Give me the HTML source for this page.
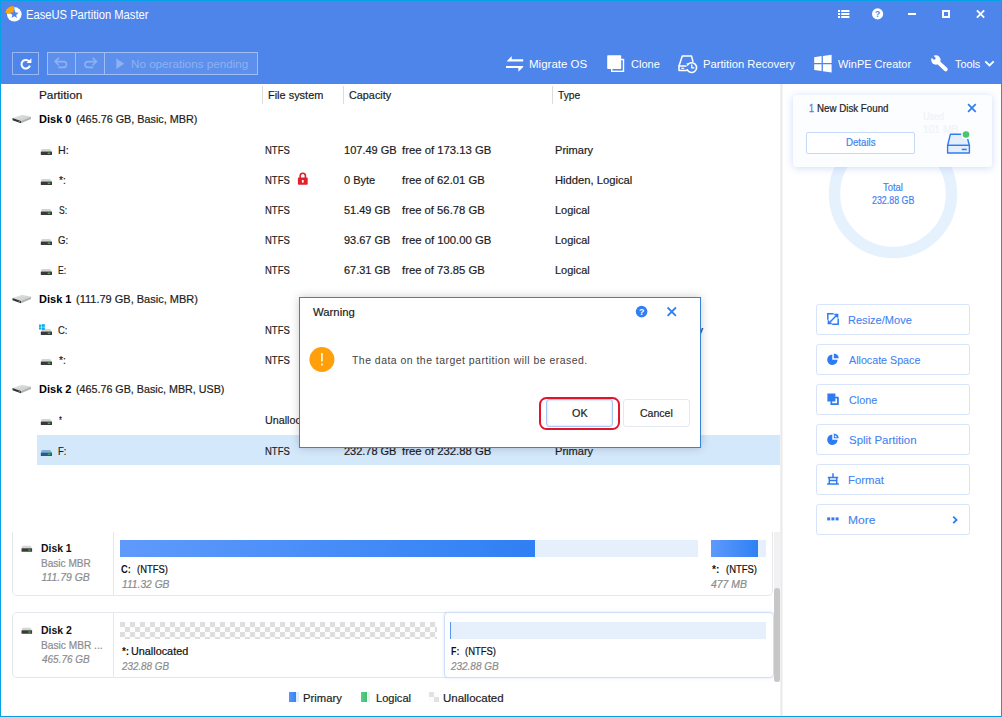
<!DOCTYPE html>
<html>
<head>
<meta charset="utf-8">
<title>EaseUS Partition Master</title>
<style>
*{box-sizing:border-box;margin:0;padding:0}
html,body{width:1002px;height:717px;overflow:hidden;background:#fff}
body{font-family:"Liberation Sans",sans-serif;font-size:12px;color:#1c1c1c;position:relative}
.abs{position:absolute}
svg{overflow:visible}
.t{position:absolute;white-space:nowrap;line-height:16px;height:16px;transform-origin:0 0;-webkit-text-stroke:0.2px}
#win{position:absolute;left:0;top:0;width:1002px;height:717px;overflow:hidden;background:#fff}
</style>
</head>
<body>
<div id="win">
<div class="abs" style="left:0px;top:0px;width:1002px;height:84px;background:#4e85eb"></div>
<svg class="abs" style="left:4px;top:4px;" width="20" height="20" viewBox="0 0 20 20"><circle cx="10.3" cy="10.3" r="7.3" fill="#fff"/><path d="M10.4 9.4 L1 9.4 A9.4 7.6 0 0 1 10.4 1.6 Z" fill="#4e85eb"/><path d="M9.9 8.9 L1.4 8.9 A8.6 6.9 0 0 1 9.9 2 Z" fill="#fba50f"/><path d="M10.3 5.6 l1.2 3 3.2 .2 -2.5 2.1 .8 3.1 -2.7-1.7 -2.7 1.7 .8-3.1 -2.5-2.1 3.2-.2z" fill="#4e85eb"/></svg>
<span class="t" style="left:26.37px;top:7px;font-size:12px;color:#fff;transform:scaleX(0.9321);-webkit-text-stroke:0;">EaseUS Partition Master</span>
<div class="abs" style="left:12px;top:52px;width:27px;height:23px;border:1px solid rgba(255,255,255,.42)"></div>
<svg class="abs" style="left:18px;top:57px;" width="15" height="14" viewBox="0 0 15 14"><path d="M11.6 5.2 A4.3 4.3 0 1 0 11.9 8.6" fill="none" stroke="#fff" stroke-width="2" stroke-linecap="butt"/><path d="M8.6 5.9 L13.4 5.9 L13.4 1.3 Z" fill="#fff"/></svg>
<div class="abs" style="left:47px;top:52px;width:211px;height:23px;border:1px solid rgba(255,255,255,.42);background:rgba(255,255,255,.09)"></div>
<div class="abs" style="left:75px;top:53px;width:1px;height:21px;background:rgba(255,255,255,.42)"></div>
<div class="abs" style="left:104px;top:53px;width:1px;height:21px;background:rgba(255,255,255,.42)"></div>
<svg class="abs" style="left:54px;top:57px;" width="15" height="12" viewBox="0 0 15 12"><path d="M1.2 4.6 H9.6 A2.9 2.9 0 0 1 9.6 10.4 H4.2" fill="none" stroke="#8eb1f3" stroke-width="1.6"/><path d="M4.9 0.9 L1.1 4.6 L4.9 8.3" fill="none" stroke="#8eb1f3" stroke-width="1.6"/></svg>
<svg class="abs" style="left:82.5px;top:57px;" width="15" height="12" viewBox="0 0 15 12"><g transform="translate(14.5,0) scale(-1,1)"><path d="M1.2 4.6 H9.6 A2.9 2.9 0 0 1 9.6 10.4 H4.2" fill="none" stroke="#8eb1f3" stroke-width="1.6"/><path d="M4.9 0.9 L1.1 4.6 L4.9 8.3" fill="none" stroke="#8eb1f3" stroke-width="1.6"/></g></svg>
<svg class="abs" style="left:116px;top:58px;" width="9" height="12" viewBox="0 0 9 12"><path d="M0.3 0.4 L8.3 5.7 L0.3 11 Z" fill="#8eb1f3"/></svg>
<span class="t" style="left:130.88px;top:56px;font-size:11.4px;color:#8eb1f3;transform:scaleX(1.0230);-webkit-text-stroke:0;">No operations pending</span>
<svg class="abs" style="left:505px;top:54px;" width="20" height="18" viewBox="0 0 20 18"><path d="M1.6 7.4 L6.7 1.9 V5.2 H18.2 V7.4 Z" fill="#fff"/><path d="M1 12 H18.2 V13 L13.4 17.8 V14.1 H1 Z" fill="#fff"/></svg>
<span class="t" style="left:529.19px;top:56px;font-size:11.4px;color:#fff;transform:scaleX(1.0116);-webkit-text-stroke:0;">Migrate OS</span>
<svg class="abs" style="left:607px;top:54px;" width="19" height="19" viewBox="0 0 19 19"><rect x="4.7" y="5.5" width="11.8" height="11.8" fill="none" stroke="#fff" stroke-width="1.4"/><rect x="0.2" y="1.2" width="14" height="13.8" rx="0.8" fill="#fff"/></svg>
<span class="t" style="left:630.71px;top:56px;font-size:11.4px;color:#fff;transform:scaleX(0.9704);-webkit-text-stroke:0;">Clone</span>
<svg class="abs" style="left:678px;top:55px;" width="21" height="19" viewBox="0 0 21 19"><path d="M8 11 H1 L4.3 0.9 H13.5 L14.9 6.4" fill="none" stroke="#fff" stroke-width="1.5" stroke-linejoin="round" stroke-linecap="round"/><path d="M1 11 V15.4 H8.4" fill="none" stroke="#fff" stroke-width="1.5" stroke-linejoin="round" stroke-linecap="round"/><path d="M9.6 9.9 A4.9 4.9 0 1 1 9.2 14.6" fill="none" stroke="#fff" stroke-width="1.5" stroke-linecap="round"/><path d="M8.2 8.2 L10.6 8.6 L9.9 10.9 Z" fill="#fff"/><path d="M13.8 10 V12.8 H16" fill="none" stroke="#fff" stroke-width="1.3" stroke-linecap="round"/><rect x="3.2" y="12.7" width="3" height="1.2" fill="#fff"/></svg>
<span class="t" style="left:702.61px;top:56px;font-size:11.4px;color:#fff;transform:scaleX(0.9859);-webkit-text-stroke:0;">Partition Recovery</span>
<svg class="abs" style="left:814px;top:54px;" width="18" height="19" viewBox="0 0 18 19"><path d="M0.2 3.2 L7.6 2.1 V9 H0.2 Z M8.9 1.9 L17.6 0.7 V9 H8.9 Z M0.2 10.3 H7.6 V17.1 L0.2 16 Z M8.9 10.3 H17.6 V18.5 L8.9 17.3 Z" fill="#fff"/></svg>
<span class="t" style="left:838.20px;top:56px;font-size:11.4px;color:#fff;transform:scaleX(0.9624);-webkit-text-stroke:0;">WinPE Creator</span>
<svg class="abs" style="left:930px;top:54px;" width="20" height="19" viewBox="0 0 20 19"><circle cx="5.9" cy="6" r="4.7" fill="#fff"/><path d="M8 8.1 L15.7 15.3" stroke="#fff" stroke-width="4" stroke-linecap="round"/><path d="M0.2 0.3 L5 5.1" stroke="#4e85eb" stroke-width="2.7"/></svg>
<span class="t" style="left:954.96px;top:56px;font-size:11.4px;color:#fff;transform:scaleX(0.9500);-webkit-text-stroke:0;">Tools</span>
<svg class="abs" style="left:984px;top:59px;" width="12" height="9" viewBox="0 0 12 9"><path d="M1.3 2.4 L5.5 6.4 L9.7 2.4" fill="none" stroke="#fff" stroke-width="2"/></svg>
<svg class="abs" style="left:837px;top:9px;" width="14" height="10" viewBox="0 0 14 10"><g fill="#fff"><rect x="1" y="1" width="2" height="2"/><rect x="4.2" y="1" width="8.2" height="2"/><rect x="1" y="4" width="2" height="2"/><rect x="4.2" y="4" width="8.2" height="2"/><rect x="1" y="7" width="2" height="2"/><rect x="4.2" y="7" width="8.2" height="2"/></g></svg>
<svg class="abs" style="left:871px;top:7px;" width="14" height="14" viewBox="0 0 14 14"><circle cx="6.6" cy="6.9" r="5.6" fill="#fff"/><text x="6.6" y="10" font-family="Liberation Sans" font-weight="bold" font-size="8.6" text-anchor="middle" fill="#4e85eb">?</text></svg>
<div class="abs" style="left:908px;top:13px;width:8px;height:2px;background:#fff"></div>
<div class="abs" style="left:942px;top:10px;width:8px;height:8px;border:2px solid #fff"></div>
<svg class="abs" style="left:975px;top:8px;" width="12" height="12" viewBox="0 0 12 12"><path d="M1.9 2.3 L9.2 9.7 M9.2 2.3 L1.9 9.7" stroke="#fff" stroke-width="1.8"/></svg>
<span class="t" style="left:38.77px;top:87px;font-size:11.4px;color:#1c1c1c;transform:scaleX(1.0350);">Partition</span>
<span class="t" style="left:267.84px;top:87px;font-size:11.4px;color:#1c1c1c;transform:scaleX(0.9607);">File system</span>
<span class="t" style="left:349.12px;top:87px;font-size:11.4px;color:#1c1c1c;transform:scaleX(0.9509);">Capacity</span>
<span class="t" style="left:558.37px;top:87px;font-size:11.4px;color:#1c1c1c;transform:scaleX(0.9042);">Type</span>
<div class="abs" style="left:262px;top:86px;width:1px;height:18px;background:#dcdcdc"></div>
<div class="abs" style="left:343px;top:86px;width:1px;height:18px;background:#dcdcdc"></div>
<div class="abs" style="left:552px;top:86px;width:1px;height:18px;background:#dcdcdc"></div>
<div class="abs" style="left:37px;top:435px;width:743px;height:30px;background:#d4e8fc"></div>
<svg class="abs" style="left:12px;top:114px;" width="20" height="10" viewBox="0 0 20 10"><defs><linearGradient id="bd123" x1="0" y1="0" x2="1" y2="1"><stop offset="0" stop-color="#e6e7e8"/><stop offset="1" stop-color="#c3c5c7"/></linearGradient></defs><path d="M0.5 4 L10 0.7 L19 2.8 L9 7 Z" fill="url(#bd123)"/><path d="M0.5 4 L9 7 L9 9.3 L0.5 6.2 Z" fill="#333"/><path d="M9 7 L19 2.8 L19 5 L9 9.3 Z" fill="#aeb0b2"/><rect x="6.6" y="6.9" width="1.6" height="1.2" fill="#2fb24a"/></svg>
<span class="t" style="left:38.88px;top:111px;font-size:11.4px;color:#000;transform:scaleX(0.9662);font-weight:bold;-webkit-text-stroke:0;">Disk 0</span>
<span class="t" style="left:75.69px;top:111px;font-size:11.4px;color:#1c1c1c;transform:scaleX(0.9494);">(465.76 GB, Basic, MBR)</span>
<svg class="abs" style="left:12px;top:294px;" width="20" height="10" viewBox="0 0 20 10"><defs><linearGradient id="bd303" x1="0" y1="0" x2="1" y2="1"><stop offset="0" stop-color="#e6e7e8"/><stop offset="1" stop-color="#c3c5c7"/></linearGradient></defs><path d="M0.5 4 L10 0.7 L19 2.8 L9 7 Z" fill="url(#bd303)"/><path d="M0.5 4 L9 7 L9 9.3 L0.5 6.2 Z" fill="#333"/><path d="M9 7 L19 2.8 L19 5 L9 9.3 Z" fill="#aeb0b2"/><rect x="6.6" y="6.9" width="1.6" height="1.2" fill="#2fb24a"/></svg>
<span class="t" style="left:38.88px;top:291px;font-size:11.4px;color:#000;transform:scaleX(0.9662);font-weight:bold;-webkit-text-stroke:0;">Disk 1</span>
<span class="t" style="left:75.68px;top:291px;font-size:11.4px;color:#1c1c1c;transform:scaleX(0.9659);">(111.79 GB, Basic, MBR)</span>
<svg class="abs" style="left:12px;top:384px;" width="20" height="10" viewBox="0 0 20 10"><defs><linearGradient id="bd393" x1="0" y1="0" x2="1" y2="1"><stop offset="0" stop-color="#e6e7e8"/><stop offset="1" stop-color="#c3c5c7"/></linearGradient></defs><path d="M0.5 4 L10 0.7 L19 2.8 L9 7 Z" fill="url(#bd393)"/><path d="M0.5 4 L9 7 L9 9.3 L0.5 6.2 Z" fill="#333"/><path d="M9 7 L19 2.8 L19 5 L9 9.3 Z" fill="#aeb0b2"/><rect x="6.6" y="6.9" width="1.6" height="1.2" fill="#2fb24a"/></svg>
<span class="t" style="left:38.88px;top:381px;font-size:11.4px;color:#000;transform:scaleX(0.9662);font-weight:bold;-webkit-text-stroke:0;">Disk 2</span>
<span class="t" style="left:75.69px;top:381px;font-size:11.4px;color:#1c1c1c;transform:scaleX(0.9414);">(465.76 GB, Basic, MBR, USB)</span>
<svg class="abs" style="left:40px;top:147.5px;" width="13" height="8" viewBox="0 0 13 8"><path d="M1.8 0.9 H10.2 L11.9 3.5 H0.9 Z" fill="#d2d4d6"/><rect x="0.8" y="3.4" width="11.2" height="3.7" rx="0.5" fill="#3a3a3a"/><rect x="7.8" y="4.5" width="2.5" height="1.5" fill="#2fb24a"/></svg>
<span class="t" style="left:57.96px;top:142px;font-size:11.4px;color:#1c1c1c;transform:scaleX(0.9368);">H:</span>
<span class="t" style="left:265.37px;top:142px;font-size:11.4px;color:#1c1c1c;transform:scaleX(0.8319);">NTFS</span>
<span class="t" style="left:344.07px;top:142px;font-size:11.4px;color:#1c1c1c;transform:scaleX(0.9671);">107.49 GB</span>
<span class="t" style="left:401.55px;top:142px;font-size:11.4px;color:#1c1c1c;transform:scaleX(0.9938);">free of 173.13 GB</span>
<span class="t" style="left:555.33px;top:142px;font-size:11.4px;color:#1c1c1c;transform:scaleX(0.9725);">Primary</span>
<svg class="abs" style="left:40px;top:177.5px;" width="13" height="8" viewBox="0 0 13 8"><path d="M1.8 0.9 H10.2 L11.9 3.5 H0.9 Z" fill="#d2d4d6"/><rect x="0.8" y="3.4" width="11.2" height="3.7" rx="0.5" fill="#3a3a3a"/><rect x="7.8" y="4.5" width="2.5" height="1.5" fill="#2fb24a"/></svg>
<span class="t" style="left:58.68px;top:172px;font-size:11.4px;color:#1c1c1c;transform:scaleX(0.8960);">*:</span>
<span class="t" style="left:265.37px;top:172px;font-size:11.4px;color:#1c1c1c;transform:scaleX(0.8319);">NTFS</span>
<span class="t" style="left:344.32px;top:172px;font-size:11.4px;color:#1c1c1c;transform:scaleX(0.9664);">0 Byte</span>
<span class="t" style="left:401.55px;top:172px;font-size:11.4px;color:#1c1c1c;transform:scaleX(0.9897);">free of 62.01 GB</span>
<span class="t" style="left:555.31px;top:172px;font-size:11.4px;color:#1c1c1c;transform:scaleX(0.9850);">Hidden, Logical</span>
<svg class="abs" style="left:40px;top:207.5px;" width="13" height="8" viewBox="0 0 13 8"><path d="M1.8 0.9 H10.2 L11.9 3.5 H0.9 Z" fill="#d2d4d6"/><rect x="0.8" y="3.4" width="11.2" height="3.7" rx="0.5" fill="#3a3a3a"/><rect x="7.8" y="4.5" width="2.5" height="1.5" fill="#2fb24a"/></svg>
<span class="t" style="left:58.53px;top:202px;font-size:11.4px;color:#1c1c1c;transform:scaleX(0.7459);">S:</span>
<span class="t" style="left:265.37px;top:202px;font-size:11.4px;color:#1c1c1c;transform:scaleX(0.8319);">NTFS</span>
<span class="t" style="left:344.32px;top:202px;font-size:11.4px;color:#1c1c1c;transform:scaleX(0.9638);">51.49 GB</span>
<span class="t" style="left:401.55px;top:202px;font-size:11.4px;color:#1c1c1c;transform:scaleX(0.9897);">free of 56.78 GB</span>
<span class="t" style="left:555.34px;top:202px;font-size:11.4px;color:#1c1c1c;transform:scaleX(0.9606);">Logical</span>
<svg class="abs" style="left:40px;top:237.5px;" width="13" height="8" viewBox="0 0 13 8"><path d="M1.8 0.9 H10.2 L11.9 3.5 H0.9 Z" fill="#d2d4d6"/><rect x="0.8" y="3.4" width="11.2" height="3.7" rx="0.5" fill="#3a3a3a"/><rect x="7.8" y="4.5" width="2.5" height="1.5" fill="#2fb24a"/></svg>
<span class="t" style="left:58.48px;top:232px;font-size:11.4px;color:#1c1c1c;transform:scaleX(0.8476);">G:</span>
<span class="t" style="left:265.37px;top:232px;font-size:11.4px;color:#1c1c1c;transform:scaleX(0.8319);">NTFS</span>
<span class="t" style="left:344.32px;top:232px;font-size:11.4px;color:#1c1c1c;transform:scaleX(0.9638);">93.67 GB</span>
<span class="t" style="left:401.55px;top:232px;font-size:11.4px;color:#1c1c1c;transform:scaleX(0.9938);">free of 100.00 GB</span>
<span class="t" style="left:555.34px;top:232px;font-size:11.4px;color:#1c1c1c;transform:scaleX(0.9606);">Logical</span>
<svg class="abs" style="left:40px;top:267.5px;" width="13" height="8" viewBox="0 0 13 8"><path d="M1.8 0.9 H10.2 L11.9 3.5 H0.9 Z" fill="#d2d4d6"/><rect x="0.8" y="3.4" width="11.2" height="3.7" rx="0.5" fill="#3a3a3a"/><rect x="7.8" y="4.5" width="2.5" height="1.5" fill="#2fb24a"/></svg>
<span class="t" style="left:58.15px;top:262px;font-size:11.4px;color:#1c1c1c;transform:scaleX(0.7543);">E:</span>
<span class="t" style="left:265.37px;top:262px;font-size:11.4px;color:#1c1c1c;transform:scaleX(0.8319);">NTFS</span>
<span class="t" style="left:344.32px;top:262px;font-size:11.4px;color:#1c1c1c;transform:scaleX(0.9638);">67.31 GB</span>
<span class="t" style="left:401.55px;top:262px;font-size:11.4px;color:#1c1c1c;transform:scaleX(0.9897);">free of 73.85 GB</span>
<span class="t" style="left:555.34px;top:262px;font-size:11.4px;color:#1c1c1c;transform:scaleX(0.9606);">Logical</span>
<svg class="abs" style="left:40px;top:327.5px;" width="13" height="8" viewBox="0 0 13 8"><path d="M1.8 0.9 H10.2 L11.9 3.5 H0.9 Z" fill="#d2d4d6"/><rect x="0.8" y="3.4" width="11.2" height="3.7" rx="0.5" fill="#3a3a3a"/><rect x="7.8" y="4.5" width="2.5" height="1.5" fill="#2fb24a"/></svg><svg class="abs" style="left:39px;top:324px;" width="6" height="6" viewBox="0 0 6 6"><g fill="#00adef"><rect x="0" y="0.6" width="2.5" height="2.2"/><rect x="3" y="0.2" width="2.8" height="2.6"/><rect x="0" y="3.3" width="2.5" height="2.2"/><rect x="3" y="3.3" width="2.8" height="2.6"/></g></svg>
<span class="t" style="left:58.48px;top:322px;font-size:11.4px;color:#1c1c1c;transform:scaleX(0.8300);">C:</span>
<span class="t" style="left:265.37px;top:322px;font-size:11.4px;color:#1c1c1c;transform:scaleX(0.8319);">NTFS</span>
<span class="t" style="left:344.32px;top:322px;font-size:11.4px;color:#1c1c1c;transform:scaleX(0.9638);">31.66 GB</span>
<span class="t" style="left:401.55px;top:322px;font-size:11.4px;color:#1c1c1c;transform:scaleX(1.0137);">free of 111.32 GB</span>
<span class="t" style="left:555.81px;top:322px;font-size:11.4px;color:#1c1c1c;transform:scaleX(0.9797);">System, Boot, Active, Primary</span>
<svg class="abs" style="left:40px;top:357.5px;" width="13" height="8" viewBox="0 0 13 8"><path d="M1.8 0.9 H10.2 L11.9 3.5 H0.9 Z" fill="#d2d4d6"/><rect x="0.8" y="3.4" width="11.2" height="3.7" rx="0.5" fill="#3a3a3a"/><rect x="7.8" y="4.5" width="2.5" height="1.5" fill="#2fb24a"/></svg>
<span class="t" style="left:58.68px;top:352px;font-size:11.4px;color:#1c1c1c;transform:scaleX(0.8960);">*:</span>
<span class="t" style="left:265.37px;top:352px;font-size:11.4px;color:#1c1c1c;transform:scaleX(0.8319);">NTFS</span>
<span class="t" style="left:344.29px;top:352px;font-size:11.4px;color:#1c1c1c;transform:scaleX(1.0299);">80 MB</span>
<span class="t" style="left:401.54px;top:352px;font-size:11.4px;color:#1c1c1c;transform:scaleX(1.0230);">free of 477 MB</span>
<span class="t" style="left:555.33px;top:352px;font-size:11.4px;color:#1c1c1c;transform:scaleX(0.9725);">Primary</span>
<svg class="abs" style="left:40px;top:417.5px;" width="13" height="8" viewBox="0 0 13 8"><path d="M1.8 0.9 H10.2 L11.9 3.5 H0.9 Z" fill="#d2d4d6"/><rect x="0.8" y="3.4" width="11.2" height="3.7" rx="0.5" fill="#3a3a3a"/><rect x="7.8" y="4.5" width="2.5" height="1.5" fill="#2fb24a"/></svg>
<span class="t" style="left:58.74px;top:412px;font-size:11.4px;color:#1c1c1c;transform:scaleX(0.6500);">*</span>
<span class="t" style="left:265.49px;top:412px;font-size:11.4px;color:#1c1c1c;transform:scaleX(0.9413);">Unallocated</span>
<span class="t" style="left:344.32px;top:412px;font-size:11.4px;color:#1c1c1c;transform:scaleX(0.9626);">232.88 GB</span>
<span class="t" style="left:401.55px;top:412px;font-size:11.4px;color:#1c1c1c;transform:scaleX(0.9938);">free of 232.88 GB</span>
<span class="t" style="left:555.34px;top:412px;font-size:11.4px;color:#1c1c1c;transform:scaleX(0.9606);">Logical</span>
<svg class="abs" style="left:40px;top:448.5px;" width="13" height="8" viewBox="0 0 13 8"><path d="M1.8 0.9 H10.2 L11.9 3.5 H0.9 Z" fill="#7fb0d9"/><rect x="0.8" y="3.4" width="11.2" height="3.7" rx="0.5" fill="#2c5a84"/><rect x="7.8" y="4.5" width="2.5" height="1.5" fill="#2fb24a"/></svg>
<span class="t" style="left:58.07px;top:443px;font-size:11.4px;color:#1c1c1c;transform:scaleX(0.8250);">F:</span>
<span class="t" style="left:265.37px;top:443px;font-size:11.4px;color:#1c1c1c;transform:scaleX(0.8319);">NTFS</span>
<span class="t" style="left:344.32px;top:443px;font-size:11.4px;color:#1c1c1c;transform:scaleX(0.9626);">232.78 GB</span>
<span class="t" style="left:401.55px;top:443px;font-size:11.4px;color:#1c1c1c;transform:scaleX(0.9938);">free of 232.88 GB</span>
<span class="t" style="left:555.33px;top:443px;font-size:11.4px;color:#1c1c1c;transform:scaleX(0.9725);">Primary</span>
<svg class="abs" style="left:297px;top:172px;" width="12" height="14" viewBox="0 0 12 14"><path d="M3.2 6 V3.9 A2.6 2.6 0 0 1 8.4 3.9 V6" fill="none" stroke="#e0202c" stroke-width="1.6"/><rect x="0.9" y="5.6" width="9.8" height="7.2" rx="1" fill="#e0202c"/><rect x="4.9" y="8" width="1.8" height="2.6" fill="#fff"/></svg>
<div class="abs" style="left:0;top:532px;width:780px;height:160px;overflow:hidden">
<div class="abs" style="left:12px;top:-6px;width:761px;height:70px;border:1px solid #e4e7ec;border-radius:5px;background:#fff"></div>
<div class="abs" style="left:113px;top:-5px;width:1px;height:68px;background:#e4e7ec"></div>
<div class="abs" style="left:12px;top:80px;width:761px;height:66px;border:1px solid #e4e7ec;border-radius:5px;background:#fff"></div>
<div class="abs" style="left:113px;top:81px;width:1px;height:64px;background:#e4e7ec"></div>
</div>
<svg class="abs" style="left:20.5px;top:545.4px;" width="12" height="8" viewBox="0 0 12 8"><path d="M1.6 0.8 H9.4 L11 3.3 H0.6 Z" fill="#d2d4d6"/><rect x="0.5" y="3.2" width="10.6" height="3.6" rx="0.5" fill="#3a3a3a"/><rect x="7.3" y="4.3" width="2.4" height="1.4" fill="#2fb24a"/></svg>
<span class="t" style="left:41.10px;top:540px;font-size:11.2px;color:#111;transform:scaleX(0.9281);font-weight:bold;-webkit-text-stroke:0;">Disk 1</span>
<span class="t" style="left:41.07px;top:556px;font-size:10.4px;color:#8c8c8c;transform:scaleX(0.9692);">Basic MBR</span>
<span class="t" style="left:41.55px;top:570px;font-size:10.4px;color:#8c8c8c;transform:scaleX(1.0000);font-style:italic;">111.79 GB</span>
<svg class="abs" style="left:20.5px;top:627.2px;" width="12" height="8" viewBox="0 0 12 8"><path d="M1.6 0.8 H9.4 L11 3.3 H0.6 Z" fill="#d2d4d6"/><rect x="0.5" y="3.2" width="10.6" height="3.6" rx="0.5" fill="#3a3a3a"/><rect x="7.3" y="4.3" width="2.4" height="1.4" fill="#2fb24a"/></svg>
<span class="t" style="left:41.10px;top:622px;font-size:11.2px;color:#111;transform:scaleX(0.9354);font-weight:bold;-webkit-text-stroke:0;">Disk 2</span>
<span class="t" style="left:41.07px;top:638px;font-size:10.4px;color:#8c8c8c;transform:scaleX(0.9780);">Basic MBR ...</span>
<span class="t" style="left:41.80px;top:652px;font-size:10.4px;color:#8c8c8c;transform:scaleX(0.9596);font-style:italic;">465.76 GB</span>
<div class="abs" style="left:120.3px;top:540px;width:577.4px;height:17px;background:#e6f0fd"></div>
<div class="abs" style="left:120.3px;top:540px;width:415px;height:17px;background:linear-gradient(90deg,#5f9afb,#2f80f4)"></div>
<span class="t" style="left:121.16px;top:561px;font-size:10.6px;color:#111;transform:scaleX(0.8821);font-weight:bold;-webkit-text-stroke:0;">C:</span>
<span class="t" style="left:136.93px;top:561px;font-size:10.6px;color:#111;transform:scaleX(0.8872);">(NTFS)</span>
<span class="t" style="left:121.75px;top:577px;font-size:10.4px;color:#8c8c8c;transform:scaleX(0.9853);font-style:italic;">111.32 GB</span>
<div class="abs" style="left:710.7px;top:540px;width:55.6px;height:17px;background:#e6f0fd"></div>
<div class="abs" style="left:710.7px;top:540px;width:47.5px;height:17px;background:linear-gradient(90deg,#5f9afb,#2f80f4)"></div>
<span class="t" style="left:711.80px;top:561px;font-size:10.6px;color:#111;transform:scaleX(0.9630);font-weight:bold;-webkit-text-stroke:0;">*:</span>
<span class="t" style="left:725.53px;top:561px;font-size:10.6px;color:#111;transform:scaleX(0.8932);">(NTFS)</span>
<span class="t" style="left:711.40px;top:577px;font-size:10.4px;color:#8c8c8c;transform:scaleX(1.0028);font-style:italic;">477 MB</span>
<div class="abs" style="left:120px;top:622px;width:317px;height:17px;background:conic-gradient(#fdfdfd 25%,#dedede 0 50%,#fdfdfd 0 75%,#dedede 0) 0 0/10px 10px"></div>
<span class="t" style="left:121.60px;top:643px;font-size:10.6px;color:#111;transform:scaleX(0.9333);font-weight:bold;-webkit-text-stroke:0;">*:</span>
<span class="t" style="left:130.83px;top:643px;font-size:10.6px;color:#111;transform:scaleX(1.0220);">Unallocated</span>
<span class="t" style="left:122.00px;top:659px;font-size:10.4px;color:#8c8c8c;transform:scaleX(0.9455);font-style:italic;">232.88 GB</span>
<div class="abs" style="left:443.5px;top:612px;width:330px;height:66px;border:1px solid #cfdff9;border-radius:4px;background:#fff;box-shadow:0 0 3px rgba(120,165,245,.3)"></div>
<div class="abs" style="left:450px;top:621.8px;width:316.3px;height:17px;background:#e6f0fd"></div>
<div class="abs" style="left:450px;top:621.8px;width:1.2px;height:17px;background:#5a93f0"></div>
<span class="t" style="left:450.77px;top:643px;font-size:10.6px;color:#111;transform:scaleX(0.8364);font-weight:bold;-webkit-text-stroke:0;">F:</span>
<span class="t" style="left:465.03px;top:643px;font-size:10.6px;color:#111;transform:scaleX(0.8932);">(NTFS)</span>
<span class="t" style="left:451.10px;top:659px;font-size:10.4px;color:#8c8c8c;transform:scaleX(0.9576);font-style:italic;">232.88 GB</span>
<div class="abs" style="left:773.5px;top:532px;width:7px;height:150px;background:#f1f1f1"></div>
<div class="abs" style="left:774px;top:588px;width:6px;height:94px;background:#c7c7c7;border-radius:3px"></div>
<div class="abs" style="left:289.3px;top:692.3px;width:6.8px;height:9.7px;background:linear-gradient(90deg,#5796f8,#3783f4)"></div>
<div class="abs" style="left:296.1px;top:692.3px;width:2.9px;height:9.7px;background:#e3eefd"></div>
<span class="t" style="left:303.31px;top:690px;font-size:11.4px;color:#1c1c1c;transform:scaleX(0.9882);">Primary</span>
<div class="abs" style="left:360.7px;top:692.3px;width:6.8px;height:9.7px;background:linear-gradient(90deg,#5ccc86,#43bd70)"></div>
<div class="abs" style="left:367.5px;top:692.3px;width:2.9px;height:9.7px;background:#e4f5ea"></div>
<span class="t" style="left:375.53px;top:690px;font-size:11.4px;color:#1c1c1c;transform:scaleX(0.9693);">Logical</span>
<div class="abs" style="left:428.6px;top:692.3px;width:5px;height:4.9px;background:#e2e2e2"></div>
<div class="abs" style="left:433.6px;top:697.2px;width:5px;height:4.9px;background:#e2e2e2"></div>
<div class="abs" style="left:433.6px;top:692.3px;width:5px;height:4.9px;background:#fcfcfc"></div>
<div class="abs" style="left:428.6px;top:697.2px;width:5px;height:4.9px;background:#fcfcfc"></div>
<span class="t" style="left:443.04px;top:690px;font-size:11.4px;color:#1c1c1c;transform:scaleX(1.0077);">Unallocated</span>
<div class="abs" style="left:780px;top:84px;width:1px;height:632px;background:#f1f1f1"></div>
<div class="abs" style="left:781px;top:84px;width:1px;height:632px;background:#e9e9e9"></div>
<div class="abs" style="left:782px;top:84px;width:1px;height:632px;background:#f5f5f5"></div>
<svg class="abs" style="left:826px;top:127px;" width="134" height="134" viewBox="0 0 134 134"><circle cx="67" cy="67" r="58.5" fill="none" stroke="#e6f1fe" stroke-width="11.4"/></svg>
<span class="t" style="left:883.38px;top:179px;font-size:10.8px;color:#4283f2;transform:scaleX(0.8727);">Total</span>
<span class="t" style="left:871.69px;top:192px;font-size:10.8px;color:#4283f2;transform:scaleX(0.8198);">232.88 GB</span>
<div class="abs" style="left:793px;top:95px;width:198.5px;height:72px;background:rgba(252,253,255,.96);border-radius:4px;box-shadow:0 1px 7px 1px rgba(150,180,240,.38)"></div>
<span class="t" style="left:922.98px;top:108px;font-size:11px;color:#f1f3f6;transform:scaleX(0.8206);">Used</span>
<span class="t" style="left:922.90px;top:121px;font-size:11px;color:#f1f3f6;transform:scaleX(0.9288);">101 MB</span>
<span class="t" style="left:809.35px;top:101px;font-size:10.2px;color:#4283f2;transform:scaleX(0.8667);-webkit-text-stroke:0.3px #4283f2;">1</span>
<span class="t" style="left:816.68px;top:101px;font-size:10.2px;color:#222;transform:scaleX(0.9565);-webkit-text-stroke:0.2px #222;">New Disk Found</span>
<svg class="abs" style="left:966px;top:102px;" width="12" height="12" viewBox="0 0 12 12"><path d="M2.1 2.2 L9.7 9.8 M9.7 2.2 L2.1 9.8" stroke="#2f7cf2" stroke-width="1.7"/></svg>
<div class="abs" style="left:806px;top:132px;width:109px;height:22px;border:1px solid #c6d9fa;border-radius:2px;background:#fff"></div>
<span class="t" style="left:845.69px;top:135px;font-size:10.2px;color:#4283f2;transform:scaleX(0.9500);-webkit-text-stroke:0.2px #4283f2;">Details</span>
<svg class="abs" style="left:945px;top:129px;" width="28" height="26" viewBox="0 0 28 26"><path d="M2.6 16.5 L5.4 5.2 H21.4 L24.4 16.5 Z" fill="#e4eefd" stroke="#2f7cf2" stroke-width="1.4" stroke-linejoin="round"/><rect x="2.6" y="16.4" width="21.8" height="7.6" fill="#e4eefd" stroke="#2f7cf2" stroke-width="1.4" stroke-linejoin="round"/><rect x="16.8" y="19.7" width="4.9" height="1.5" fill="#2f7cf2"/><circle cx="21" cy="5.5" r="4.9" fill="#fbfcff"/><circle cx="21" cy="5.5" r="3.3" fill="#4cc46c"/></svg>
<div class="abs" style="left:816px;top:304px;width:154px;height:31px;border:1px solid #d8e4fb;border-radius:2.5px;background:#fff"></div>
<svg class="abs" style="left:827px;top:313.3px;" width="12" height="12" viewBox="0 0 12 12"><path d="M6.6 0.8 H0.8 V6.8 M5.2 11.2 H11.2 V5.4 M1.8 10.2 L10.2 1.8 M7.2 1.4 H10.6 V4.8 M1.4 7.2 V10.6 H4.8" fill="none" stroke="#2f7cf2" stroke-width="1.5"/></svg>
<span class="t" style="left:848.43px;top:312px;font-size:11.4px;color:#4283f2;transform:scaleX(0.9690);-webkit-text-stroke:0.1px;">Resize/Move</span>
<div class="abs" style="left:816px;top:344px;width:154px;height:31px;border:1px solid #d8e4fb;border-radius:2.5px;background:#fff"></div>
<svg class="abs" style="left:827px;top:353.3px;" width="12" height="12" viewBox="0 0 12 12"><path d="M5.3 1.5 A5.2 5.2 0 1 0 10.6 6.8 H5.3 Z" fill="#2f7cf2"/><path d="M6.8 0.4 A5 5 0 0 1 11.7 5.3 H6.8 Z" fill="#2f7cf2"/></svg>
<span class="t" style="left:849.40px;top:352px;font-size:11.4px;color:#4283f2;transform:scaleX(0.9391);-webkit-text-stroke:0.1px;">Allocate Space</span>
<div class="abs" style="left:816px;top:384px;width:154px;height:31px;border:1px solid #d8e4fb;border-radius:2.5px;background:#fff"></div>
<svg class="abs" style="left:827px;top:393.3px;" width="12" height="12" viewBox="0 0 12 12"><rect x="0.4" y="0.5" width="8" height="8" fill="#2f7cf2"/><path d="M10.8 4.6 V11.2 H4.4 V9.6 M9 4.6 H10.8" fill="none" stroke="#2f7cf2" stroke-width="1.5"/><rect x="4.4" y="4.6" width="6.4" height="6.6" fill="none" stroke="#2f7cf2" stroke-width="1.5"/></svg>
<span class="t" style="left:848.93px;top:392px;font-size:11.4px;color:#4283f2;transform:scaleX(0.9461);-webkit-text-stroke:0.1px;">Clone</span>
<div class="abs" style="left:816px;top:424px;width:154px;height:31px;border:1px solid #d8e4fb;border-radius:2.5px;background:#fff"></div>
<svg class="abs" style="left:827px;top:433.3px;" width="12" height="12" viewBox="0 0 12 12"><path d="M5.3 1.5 A5.2 5.2 0 1 0 10.6 6.8 H5.3 Z" fill="#2f7cf2"/><path d="M6.8 0.4 A5 5 0 0 1 11.7 5.3 H6.8 Z" fill="#2f7cf2"/><path d="M7.9 2.2 V4.2 H9.9 A2.8 2.8 0 0 0 7.9 2.2Z" fill="#fff"/></svg>
<span class="t" style="left:848.90px;top:432px;font-size:11.4px;color:#4283f2;transform:scaleX(1.0061);-webkit-text-stroke:0.1px;">Split Partition</span>
<div class="abs" style="left:816px;top:464px;width:154px;height:31px;border:1px solid #d8e4fb;border-radius:2.5px;background:#fff"></div>
<svg class="abs" style="left:827px;top:473.3px;" width="12" height="12" viewBox="0 0 12 12"><path d="M6 0.2 V4 M0.8 4.5 H11.2 M2.3 4.5 V10.6 M9.7 4.5 V10.6 M0.1 10.9 H11.9 M2.3 7.6 H9.7" fill="none" stroke="#2f7cf2" stroke-width="1.5"/></svg>
<span class="t" style="left:848.41px;top:472px;font-size:11.4px;color:#4283f2;transform:scaleX(0.9943);-webkit-text-stroke:0.1px;">Format</span>
<div class="abs" style="left:816px;top:504px;width:154px;height:31px;border:1px solid #d8e4fb;border-radius:2.5px;background:#fff"></div>
<svg class="abs" style="left:827px;top:513.3px;" width="12" height="12" viewBox="0 0 12 12"><g fill="#2f7cf2"><rect x="0.2" y="4.4" width="3" height="3"/><rect x="4.4" y="4.4" width="3" height="3"/><rect x="8.6" y="4.4" width="3" height="3"/></g></svg>
<span class="t" style="left:848.34px;top:512px;font-size:11.4px;color:#4283f2;transform:scaleX(1.0571);-webkit-text-stroke:0.1px;">More</span>
<svg class="abs" style="left:951px;top:515px;" width="8" height="10" viewBox="0 0 8 10"><path d="M2.2 1.6 L5.6 4.9 L2.2 8.2" fill="none" stroke="#2f7cf2" stroke-width="1.8"/></svg>
<div class="abs" style="left:299px;top:297px;width:402px;height:151px;background:#fff;border:1px solid #3782d3;box-shadow:0 0 9px rgba(0,0,0,.2)"></div>
<span class="t" style="left:313.30px;top:304px;font-size:11.4px;color:#1c1c1c;transform:scaleX(0.9939);">Warning</span>
<svg class="abs" style="left:635px;top:305px;" width="14" height="14" viewBox="0 0 14 14"><circle cx="6.6" cy="6.6" r="5.8" fill="#2e80f4"/><text x="6.6" y="9.8" font-family="Liberation Sans" font-weight="bold" font-size="8.8" text-anchor="middle" fill="#fff">?</text></svg>
<svg class="abs" style="left:665px;top:305px;" width="14" height="14" viewBox="0 0 14 14"><path d="M2.6 2.5 L10.9 10.8 M10.9 2.5 L2.6 10.8" stroke="#2e80f4" stroke-width="1.8"/></svg>
<svg class="abs" style="left:308px;top:346px;" width="28" height="28" viewBox="0 0 28 28"><circle cx="13.9" cy="13.5" r="12.5" fill="#ff9f0a"/><rect x="13.1" y="6.9" width="1.6" height="8.6" rx="0.6" fill="#fff"/><rect x="13.1" y="17.6" width="1.6" height="1.9" rx="0.5" fill="#fff"/></svg>
<span class="t" style="left:351.86px;top:352px;font-size:11px;color:#444;transform:scaleX(0.9512);letter-spacing:0.5px;-webkit-text-stroke:0;">The data on the target partition will be erased.</span>
<div class="abs" style="left:546px;top:399px;width:67px;height:28px;border:1px solid #a9c7f5;border-radius:3px;background:#fff;box-shadow:0 0 2px rgba(90,150,245,.5) inset"></div>
<span class="t" style="left:571.83px;top:405px;font-size:11.4px;color:#1c1c1c;transform:scaleX(0.9460);">OK</span>
<div class="abs" style="left:538.6px;top:396.6px;width:81.8px;height:33px;border:2.3px solid #e2142d;border-radius:7.5px"></div>
<div class="abs" style="left:623px;top:399px;width:67px;height:28px;border:1px solid #e3e8f3;border-radius:3px;background:#fff"></div>
<span class="t" style="left:640.44px;top:405px;font-size:11.4px;color:#1c1c1c;transform:scaleX(0.9255);">Cancel</span>
<div class="abs" style="left:0px;top:0px;width:1002px;height:1px;background:#05a1e7"></div>
<div class="abs" style="left:0px;top:0px;width:1px;height:717px;background:#05a1e7"></div>
<div class="abs" style="left:1001px;top:0px;width:1px;height:717px;background:#05a1e7"></div>
<div class="abs" style="left:0px;top:716px;width:1002px;height:1px;background:#05a1e7"></div>
</div>
</body>
</html>
